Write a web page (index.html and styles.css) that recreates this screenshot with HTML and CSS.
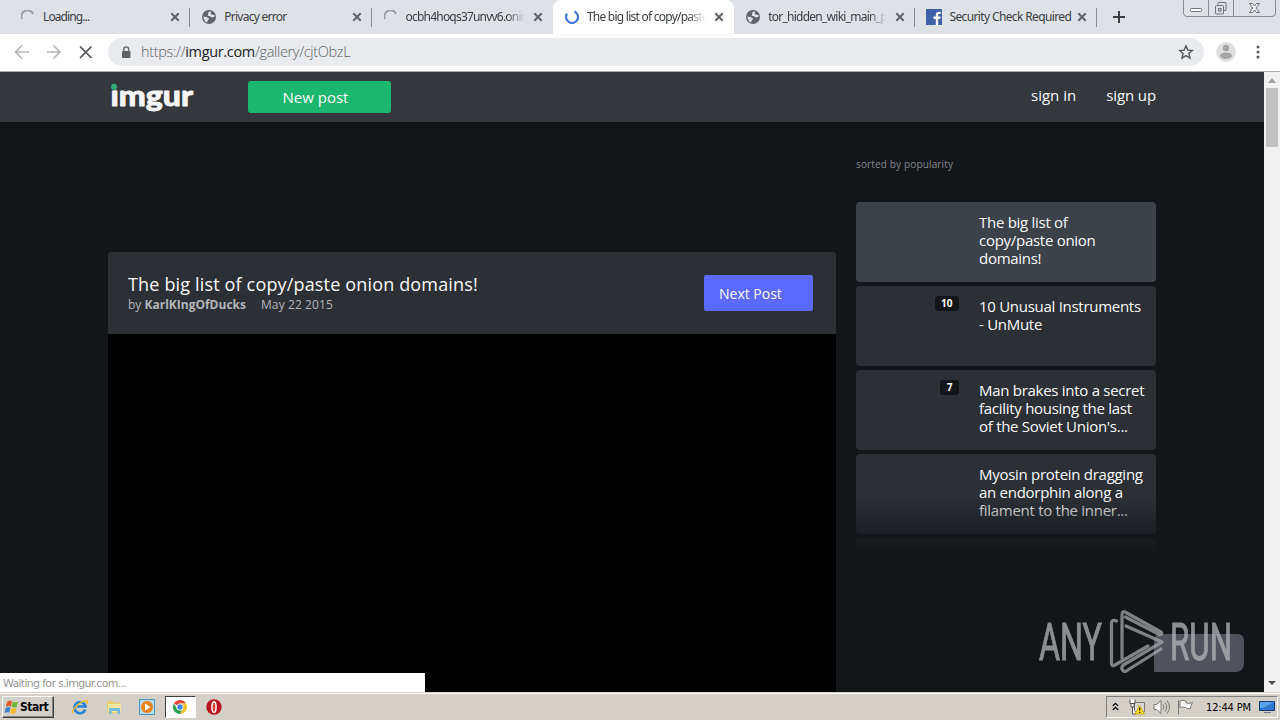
FILE: index.html
```
<!DOCTYPE html>
<html lang="en">
<head>
<meta charset="utf-8">
<title>The big list of copy/paste onion domains!</title>
<link rel="stylesheet" href="styles.css">
</head>
<body>
<svg class="defs" width="0" height="0">
  <symbol id="close" viewBox="0 0 10 10"><path d="M1.3 1.3l7.4 7.4M8.7 1.3L1.3 8.7" stroke="#5f6368" stroke-width="2" fill="none"/></symbol>
  <symbol id="spin" viewBox="0 0 14 14"><path d="M1 9A6 6 0 0 1 12 3.700" stroke="#9a9da2" stroke-width="2" fill="none"/></symbol>
  <symbol id="globe" viewBox="0 0 14 14"><circle cx="7" cy="7" r="7" fill="#5f6368"/><path d="M7.5 1.5C5 3 7 4 5.500 5.500c1.500 1 3-.5 3 1.500 1.500 1 2.500-.5 4 0V5c-1.500.5-1.500-1-3-.5C8 4 9.500 2.500 9 1.700zM1.600 6.500c2 .3 3.800.6 4.400 1.600 1.500.4 1.200 1.500.2 2C6 11.500 5 11 5.200 12.600 3 12 1.300 9 1.600 6.500z" fill="#dee1e6"/></symbol>
</svg>
<header class="browser">
  <div class="tabstrip">
    <div class="tab"><svg class="fav"><use href="#spin"/></svg><span class="label t1">Loading...</span><svg class="x"><use href="#close"/></svg></div>
    <div class="tab"><svg class="fav"><use href="#globe"/></svg><span class="label t2">Privacy error</span><svg class="x"><use href="#close"/></svg></div>
    <div class="tab bare"><svg class="fav"><use href="#spin"/></svg><span class="label fade t3">ocbh4hoqs37unvv6.onic</span><svg class="x"><use href="#close"/></svg></div>
    <div class="tab active"><svg class="fav" viewBox="0 0 14 14"><path d="M9.500 1.500A6 6 0 1 1 2 3.700" stroke="#3a76d8" stroke-width="2.200" fill="none"/></svg><span class="label fade t4">The big list of copy/paste</span><svg class="x"><use href="#close"/></svg></div>
    <div class="tab"><svg class="fav"><use href="#globe"/></svg><span class="label fade t5">tor_hidden_wiki_main_p</span><svg class="x"><use href="#close"/></svg></div>
    <div class="tab"><svg class="fav fb" viewBox="0 0 16 16"><path fill="#4060a8" d="M0 0h16v16H0z"/><path d="M12.200 16V10h2l.4-2.400h-2.400V6.200c0-.9.400-1.300 1.300-1.300h1.200V2.800h-1.900c-2 0-3 1.200-3 3v1.800H7.500V10h2.300v6z" fill="#fff"/></svg><span class="label t6">Security Check Required</span><svg class="x"><use href="#close"/></svg></div>
    <svg class="plus" viewBox="0 0 12 12"><path d="M6 0v12M0 6h12" stroke="#3c4043" stroke-width="2"/></svg>
    <svg class="winctl" viewBox="0 0 94 18" fill="none" stroke="#858a93"><path d="M.5 0v13q0 3.500 3.500 3.500h85q3.500 0 3.500-3.500V0M25.500 0v16M50.500 0v16"/><g stroke="#6d727a"><rect x="7.500" y="8.500" width="11" height="3" rx="1" fill="#fff"/><path d="M35 4.500V3q0-.5.5-.5h7q.5 0 .5.500v7q0 .5-.5.500H41"/><rect x="32.500" y="5.500" width="8" height="8.500" rx="1"/><rect x="35.500" y="8.500" width="2.500" height="2.500"/><path d="M66.500 3.500h3l2 2.500 2-2.500h3L73.300 8l3.200 4.500h-3l-2-2.500-2 2.500h-3L69.700 8z" fill="#eee"/></g></svg>
  </div>
  <div class="toolbar">
    <svg class="nav" viewBox="0 0 90 16" fill="none" stroke-width="1.700"><path d="M15 8H1.500M8 1.500L1.500 8 8 14.500M33 8h13M39.500 1.500L46 8l-6.500 6.500" stroke="#b4b6b9"/><path d="M66 2.500l11.500 11.500M77.500 2.500L66 14" stroke="#505357"/></svg>
    <div class="omnibox">
      <svg class="lock" viewBox="0 0 10 13"><rect x="1" y="5" width="8.500" height="7" rx="1" fill="#5f6368"/><path d="M2.800 5.500V3.300a2.400 2.400 0 0 1 4.800 0v2.200" fill="none" stroke="#5f6368" stroke-width="1.400"/></svg>
      <div class="url">https://<b>imgur.com</b>/gallery/cjtObzL</div>
      <svg class="star" viewBox="0 0 16 16"><path d="M8 1.800l1.800 4.300 4.600.4-3.500 3 1.100 4.500L8 11.600 4 14l1.100-4.500-3.500-3 4.600-.4z" fill="none" stroke="#55585c" stroke-width="1.400"/></svg>
    </div>
    <svg class="avatar" viewBox="0 0 20 20"><circle cx="10" cy="10" r="10" fill="#dfdfdf"/><circle cx="10" cy="6" r="3.200" fill="#a5a5a5"/><ellipse cx="10" cy="13.700" rx="6" ry="3.200" fill="#a5a5a5"/></svg>
    <svg class="dots" viewBox="0 0 4 16"><g fill="#55585c"><circle cx="2" cy="3" r="1.500"/><circle cx="2" cy="8" r="1.500"/><circle cx="2" cy="13" r="1.500"/></g></svg>
  </div>
</header>
<div class="viewport">
  <main class="page">
    <nav class="sitebar">
      <svg class="logo" viewBox="0 0 90 36"><text x="2.500" y="26.500" textLength="82.500" lengthAdjust="spacingAndGlyphs">imgur</text><path class="gap" d="M1 0h9v10.800H1z"/><circle cx="6" cy="7.800" r="3" fill="#2fae78"/></svg>
      <a class="newpost">New post</a>
      <a class="signin">sign in</a>
      <a class="signup">sign up</a>
    </nav>
    <div class="columns">
      <article class="post">
        <div class="posthead">
          <div>
            <h1>The big list of copy/paste onion domains!</h1>
            <p>by <b>KarlKIngOfDucks</b><span class="date">May 22 2015</span></p>
          </div>
          <a class="next">Next Post</a>
        </div>
        <div class="media"></div>
      </article>
      <aside class="side">
        <div class="sorted">sorted by popularity</div>
        <div class="list">
          <div class="item current"><span class="thumb"></span><p>The big list of<br>copy/paste onion<br>domains!</p></div>
          <div class="item"><span class="thumb"><i>10</i></span><p>10 Unusual Instruments<br>- UnMute</p></div>
          <div class="item"><span class="thumb"><i>7</i></span><p>Man brakes into a secret<br>facility housing the last<br>of the Soviet Union's...</p></div>
          <div class="item"><span class="thumb"></span><p>Myosin protein dragging<br>an endorphin along a<br>filament to the inner...</p></div>
          <div class="item"></div>
          <div class="shade"></div>
        </div>
      </aside>
    </div>
    <div class="feedback"></div>
    <svg class="anyrun" viewBox="0 0 200 70"><g fill="#b5b6b9" stroke="#b5b6b9" stroke-width="1.100"><text x="3" y="54.500" textLength="63" lengthAdjust="spacingAndGlyphs">ANY</text><text x="134" y="54.500" textLength="62" lengthAdjust="spacingAndGlyphs">RUN</text></g><path d="M80.500 16q-5-2-5 2v40q0 4 3.500 2l33-19M86 53V10q0-5 4-2.500L125 27q2 2-1 2.800L89.500 12M90 21l36 16-37 22q-4 2-3 5 2 4 5 1.500L125 44" fill="none" stroke="#a4a5a8" stroke-width="3.200" stroke-linejoin="round" stroke-linecap="round"/></svg>
    <div class="status">Waiting for s.imgur.com...</div>
  </main>
  <div class="scroll"><span class="up"></span><span class="grip"></span><span class="down"></span></div>
</div>
<footer class="taskbar">
  <div class="start"><svg viewBox="0 0 16 16"><path d="M3 3q2.500-2 5-.8L6.800 7.500Q4.300 6.500 2 8z" fill="#e65a2a"/><path d="M8.800 2.600q2.500 1.200 5.200-.2L12.700 8Q10 9 7.600 7.800z" fill="#72b73d"/><path d="M1.700 9q2.300-1.500 4.800-.5L5.300 13.600Q3 12.500.5 14z" fill="#3f82d4"/><path d="M7.300 8.800q2.500 1.200 5.200.2l-1.300 5.200q-2.700 1-5.200-.2z" fill="#f4bd28"/></svg><b>Start</b></div>
  <svg class="ql ie" viewBox="0 0 16 16"><path d="M13.300 10.500A5.600 5.600 0 1 1 13.500 7.500H4.500" fill="none" stroke="#2881d3" stroke-width="2.700"/><path d="M1 14.500C-1 11 9 1 14.500 1.700 16 2 15 4 14 5" fill="none" stroke="#e9bd2c" stroke-width="1.500"/></svg>
  <svg class="ql" viewBox="0 0 16 16"><path d="M1 2h6l1 1.500h6V14H1z" fill="#e8ce6c"/><path d="M2 5h13v8H2z" fill="#f7e9a2"/><path d="M3 9h11v6h-2.500v-3h-6v3H3z" fill="#78b8dc"/></svg>
  <svg class="ql" viewBox="0 0 16 16"><path d="M.5.5h15v15H.5z" fill="#b9daf2" stroke="#4f91c9"/><circle cx="8" cy="8" r="6" fill="#ef8519"/><path d="M6 4.500v7L11.500 8z" fill="#fff"/></svg>
  <div class="running"><svg viewBox="0 0 16 16"><path d="M8 8L1.900 4.500A7 7 0 0 1 14.100 4.500H8z" fill="#df4438"/><path d="M8 8V4.500h6.100A7 7 0 0 1 8 15l3-5.200z" fill="#f3c32d"/><path d="M8 15A7 7 0 0 1 1.900 4.500L5 9.800 8 11.500l2-.2z" fill="#2fa04e"/><circle cx="8" cy="8" r="3.500" fill="#fff"/><circle cx="8" cy="8" r="2.700" fill="#4283e8"/></svg></div>
  <svg class="ql opera" viewBox="0 0 16 16"><circle cx="8" cy="8" r="7.700" fill="#b91520"/><ellipse cx="8" cy="8" rx="2.100" ry="5.300" fill="#d6433f" stroke="#fff" stroke-width="1.400"/></svg>
  <div class="tray">
    <svg class="chev" viewBox="0 0 7 9"><path d="M.8 4l2.700-2.700L6.200 4M.8 8l2.700-2.700L6.200 8" fill="none" stroke="#000" stroke-width="1.300"/></svg>
    <svg class="net" viewBox="0 0 16 16"><path d="M5.500 3.500h10v9h-10z" fill="#d7d7d7" stroke="#777"/><path d="M1 .500v4h5v-4M2 5v3h3V5M3.500 8v7H7" fill="#fff" stroke="#555"/><path d="M10.500 6L6 15h9.500z" fill="#ffdc1b" stroke="#c6a300" stroke-width=".7"/><path d="M10.700 8.500v3M10.700 12.800v1.200" stroke="#222" stroke-width="1.300"/></svg>
    <svg class="vol" viewBox="0 0 17 16" fill="none" stroke="#777"><path d="M1 5.500h2.500L8 1.500v13l-4.500-4H1z" fill="#fff"/><path d="M10 5.500q2 2.500 0 5M12 3.500q3.500 4.500 0 9M14 1.500q5 6.500 0 13"/></svg>
    <svg class="flag" viewBox="0 0 16 16"><path d="M1.500 1v14.500M3 2q3-1.500 6 0v2q3 1 6.500-.5-2 3-2 6-3 1-5-1-3-1-5.500 0z" fill="#fff" stroke="#777"/></svg>
    <span class="clock">12:44 PM</span>
    <svg class="desk" viewBox="0 0 16 14"><path d="M.5 1.500h15v9H.5z" fill="#2c76cd" stroke="#123b76"/><path d="M1 2h14L4 8H1z" fill="#5ba3e8"/><path d="M5 12.500h7" stroke="#6d7886"/></svg>
  </div>
</footer>
</body>
</html>
```
FILE: styles.css
```
* { box-sizing: border-box; }
body { margin: 0; width: 1280px; height: 720px; overflow: hidden; font-family: "Open Sans", "Noto Sans", sans-serif; display: flex; flex-direction: column; background: #fff; }
p, h1 { margin: 0; font-weight: 400; }
svg { display: block; flex: none; }
.defs { position: absolute; }
.browser { height: 72px; flex: none; border-bottom: 1px solid #a9acad; background: #fff; }
.tabstrip { height: 34px; background: #dee1e6; display: flex; align-items: center; padding-left: 9px; }
.tab { width: 181.300px; height: 34px; flex: none; display: flex; align-items: center; padding: 0 10px 0 12px; background: linear-gradient(#8b8e94, #8b8e94) right 0 top 8px / 1px 19px no-repeat; }
.tab.bare { background: none; }
.tab.active { background: #fff; border-radius: 8px 8px 0 0; }
.fav { width: 14px; height: 14px; }
.fb { width: 16px; height: 16px; margin: 0 -1px; }
.label { flex: 1; min-width: 0; margin: 0 7px 0 8px; white-space: nowrap; font-size: 12px; line-height: 18px; color: #3c4043; font-family: "Noto Sans", sans-serif; letter-spacing: -.63px; }
.t1 { letter-spacing: -.9px; }
.t2 { letter-spacing: -.75px; }
.t3 { letter-spacing: -.8px; }
.t4 { letter-spacing: -.75px; }
.t5 { letter-spacing: -.75px; }
.fade { -webkit-mask-image: linear-gradient(90deg, #000 84%, transparent 99%); mask-image: linear-gradient(90deg, #000 84%, transparent 99%); }
.x { width: 10px; height: 10px; }
.plus { width: 12px; height: 12px; margin-left: 16px; }
.winctl { width: 94px; height: 18px; margin-left: auto; margin-right: 3px; align-self: flex-start; }
.toolbar { height: 36px; display: flex; align-items: center; padding-left: 14px; }
.nav { width: 90px; height: 16px; }
.omnibox { margin-left: 4px; width: 1096px; height: 28px; border-radius: 14px; background: #e9ebee; display: flex; align-items: center; padding: 0 10px 0 13px; }
.lock { width: 10px; height: 13px; }
.url { margin-left: 10px; flex: 1; font-size: 14.500px; line-height: 20px; font-weight: 300; color: #5f6368; letter-spacing: -.34px; }
.url b { font-weight: 400; color: #202124; }
.star { width: 16px; height: 16px; }
.avatar { width: 20px; height: 20px; margin-left: 12px; }
.dots { width: 4px; height: 16px; margin-left: 20px; }
.viewport { height: 620px; flex: none; display: flex; }
.page { width: 1264px; height: 620px; position: relative; overflow: hidden; background: #121619; }
.sitebar { height: 50px; background: #34373c; display: flex; align-items: flex-start; padding-left: 108px; color: #fafafa; font-size: 15px; line-height: 20px; }
.logo { width: 90px; height: 36px; margin-top: 7px; }
.logo text { font: 900 28px Lato, sans-serif; fill: #f5f5f5; stroke: #f5f5f5; stroke-width: .8; stroke-linejoin: round; }
.gap { fill: #34373c; }
.newpost { margin: 9px 0 0 50px; width: 143px; height: 32px; line-height: 33px; padding-right: 8px; text-align: center; background: #1bb76e; border-radius: 3px; }
.signin { margin: 13px 0 0 640px; }
.signup { margin: 13px 0 0 30px; letter-spacing: -.1px; }
.columns { display: flex; padding-left: 108px; gap: 20px; }
.post { width: 728px; margin-top: 130px; }
.posthead { height: 82px; background: #2c2f34; border-radius: 3px 3px 0 0; padding: 20px 23px 0 20px; display: flex; justify-content: space-between; }
h1 { font-size: 18px; line-height: 24px; color: #fafafa; letter-spacing: .16px; }
.posthead p { font-size: 12px; line-height: 16px; padding-top: 1px; color: #b4b5b8; }
.date { margin-left: 15px; letter-spacing: .1px; }
.next { margin-top: 3px; width: 109px; height: 36px; padding-left: 15px; background: #5c69ff; border-radius: 2px; color: #fafafa; font-size: 14px; line-height: 37px; }
.media { height: 360px; background: #000; }
.side { width: 300px; padding-top: 34px; }
.sorted { font-size: 10px; line-height: 16px; color: #85878b; height: 46px; letter-spacing: .15px; }
.list { position: relative; height: 350px; overflow: hidden; }
.item { height: 80px; margin-bottom: 4px; border-radius: 4px; background: #2c2f34; display: flex; }
.item.current { background: #3d4148; }
.item p { font-size: 15px; line-height: 18px; padding-top: 11px; color: #fafafa; white-space: nowrap; letter-spacing: -.28px; }
.thumb { width: 103px; margin-right: 20px; display: flex; justify-content: flex-end; align-items: flex-start; }
.thumb i { font: 700 10px/15px "Open Sans", sans-serif; color: #fff; background: #121619; border-radius: 3px; padding: 0 6.500px; margin-top: 10px; }
.shade { position: absolute; left: 0; right: 0; bottom: 0; height: 55px; background: linear-gradient(transparent, #121619); }
.feedback { position: absolute; left: 1154px; top: 562px; width: 90px; height: 38px; background: #50535b; border-radius: 6px 6px 8px 0; }
.anyrun { position: absolute; left: 1036px; top: 533px; width: 200px; height: 70px; opacity: .75; }
.anyrun text { font: 400 52px Roboto, sans-serif; }
.status { position: absolute; left: 0; bottom: 0; width: 425px; height: 19px; padding-left: 3px; background: #fff; color: #989898; font: 11px/21px "DejaVu Sans", sans-serif; letter-spacing: -.7px; }
.scroll { width: 16px; background: #f1f1f1; display: flex; flex-direction: column; align-items: center; }
.up { margin: 6px 0 5px; border: 4px solid transparent; border-top: 0; border-bottom: 5px solid #a3a3a3; }
.grip { width: 12px; height: 59px; background: #c1c1c1; }
.down { margin: auto 0 7px; border: 4px solid transparent; border-bottom: 0; border-top: 4px solid #505050; }
.taskbar { height: 28px; background: #d4d0c8; border-top: 1px solid #d4d0c8; box-shadow: inset 0 1px #fff; display: flex; align-items: center; padding: 1px 2px 0; }
.start { width: 52px; height: 22px; border: 1px solid; border-color: #fff #404040 #404040 #fff; box-shadow: inset -1px -1px #808080; display: flex; align-items: center; padding-left: 1px; font: 12px "DejaVu Sans Condensed", "DejaVu Sans", sans-serif; letter-spacing: -.5px; }
.start svg { width: 16px; height: 16px; }
.ql { width: 16px; height: 16px; margin-left: 17.500px; }
.ie { margin-left: 18px; }
.running { width: 31px; height: 22px; margin-left: 10px; border: 1px solid; border-color: #404040 #fff #fff #404040; background: #fff; padding: 2px 0 0 6px; }
.running svg { width: 16px; height: 16px; }
.opera { margin-left: 10px; }
.tray { margin-left: auto; width: 172px; height: 22px; border: 1px solid; border-color: #808080 #fff #fff #808080; display: flex; align-items: center; padding-left: 5px; }
.chev { width: 7px; height: 9px; margin-bottom: 2px; }
.net { width: 16px; height: 16px; margin-left: 10px; }
.vol { width: 17px; height: 16px; margin-left: 8px; }
.flag { width: 16px; height: 16px; margin-left: 7px; }
.clock { margin-left: 13px; width: 53px; font: 11px "DejaVu Sans Condensed", "DejaVu Sans", sans-serif; letter-spacing: -.15px; white-space: nowrap; }
.desk { width: 16px; height: 14px; }
```
